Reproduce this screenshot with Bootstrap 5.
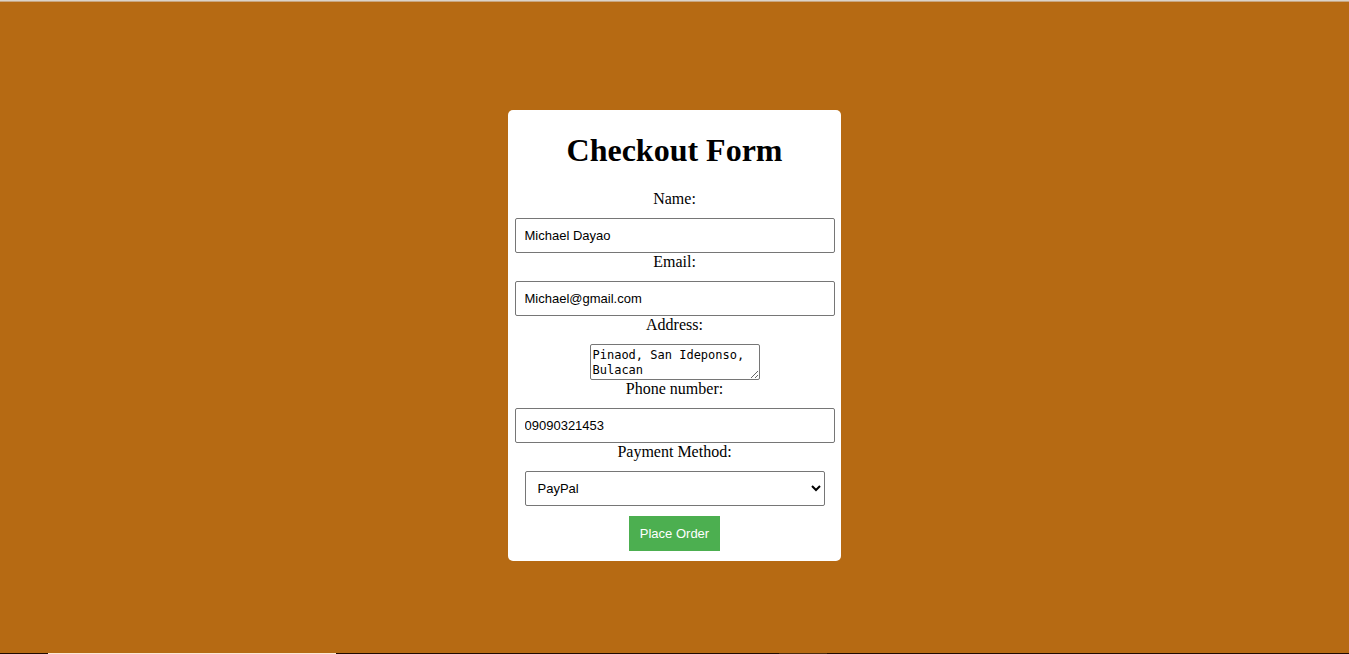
<!DOCTYPE html>
<html lang="en">
<head>
<meta charset="utf-8">
<meta name="viewport" content="width=device-width, initial-scale=1">
<title>Checkout Form</title>
<link rel="stylesheet" href="https://cdn.jsdelivr.net/npm/bootstrap@5.3.0/dist/css/bootstrap.min.css">
<style>
  body { background: #b66a13; color: #000; font-family: "Liberation Serif", serif; font-size: 16px; line-height: 18px; }
  .top-edge { height: 2px; background: #dcd3c8; border-bottom: 1px solid #c9a680; }
  .bottom-edge { height: 1px; background: linear-gradient(to right, #200b00 48px, #fbe9d8 48px 336px, #200b00 336px 779px, #4a2c10 779px 827px, #200b00 827px); }
  .checkout { width: 333px; border-radius: 5px; margin-top: 16px; }
  .checkout h1 { font-size: 32px; line-height: 37px; margin: 22px 0 21px; }
  .field-label { margin-bottom: 10px; }
  .field { font-family: "Liberation Sans", sans-serif; font-size: 13px; line-height: 15px; color: #000; background: #fff; border: 1px solid #767676; border-radius: 2px; }
  .box { width: 320px; height: 35px; padding: 9px; }
  .pick { width: 300px; height: 35px; padding: 8px; }
  .area { width: 170px; height: 36px; padding: 3px 2px 1px; font-family: "DejaVu Sans Mono", monospace; font-size: 12px; overflow: hidden; resize: both; }
  .order { font-family: "Liberation Sans", sans-serif; font-size: 13px; line-height: 15px; height: 35px; padding: 10px 11px; margin: 10px 0; background: #4caf50; color: #fff; }
</style>
</head>
<body class="min-vh-100 d-flex flex-column">
<div class="top-edge"></div>
<main class="flex-grow-1 d-flex align-items-center justify-content-center">
  <form class="checkout bg-white d-flex flex-column align-items-center text-center">
    <h1 class="fw-bold">Checkout Form</h1>
    <label class="field-label" for="name">Name:</label>
    <input class="field box" id="name" type="text" value="Michael Dayao">
    <label class="field-label" for="email">Email:</label>
    <input class="field box" id="email" type="email" value="Michael@gmail.com">
    <label class="field-label" for="address">Address:</label>
    <textarea class="field area" id="address">Pinaod, San Ideponso, Bulacan</textarea>
    <label class="field-label" for="phone">Phone number:</label>
    <input class="field box" id="phone" type="tel" value="09090321453">
    <label class="field-label" for="payment">Payment Method:</label>
    <select class="field pick" id="payment"><option>PayPal</option><option>Credit Card</option></select>
    <button class="order border-0" type="submit">Place Order</button>
  </form>
</main>
<div class="bottom-edge"></div>
<script src="https://cdn.jsdelivr.net/npm/bootstrap@5.3.0/dist/js/bootstrap.bundle.min.js"></script>
</body>
</html>
